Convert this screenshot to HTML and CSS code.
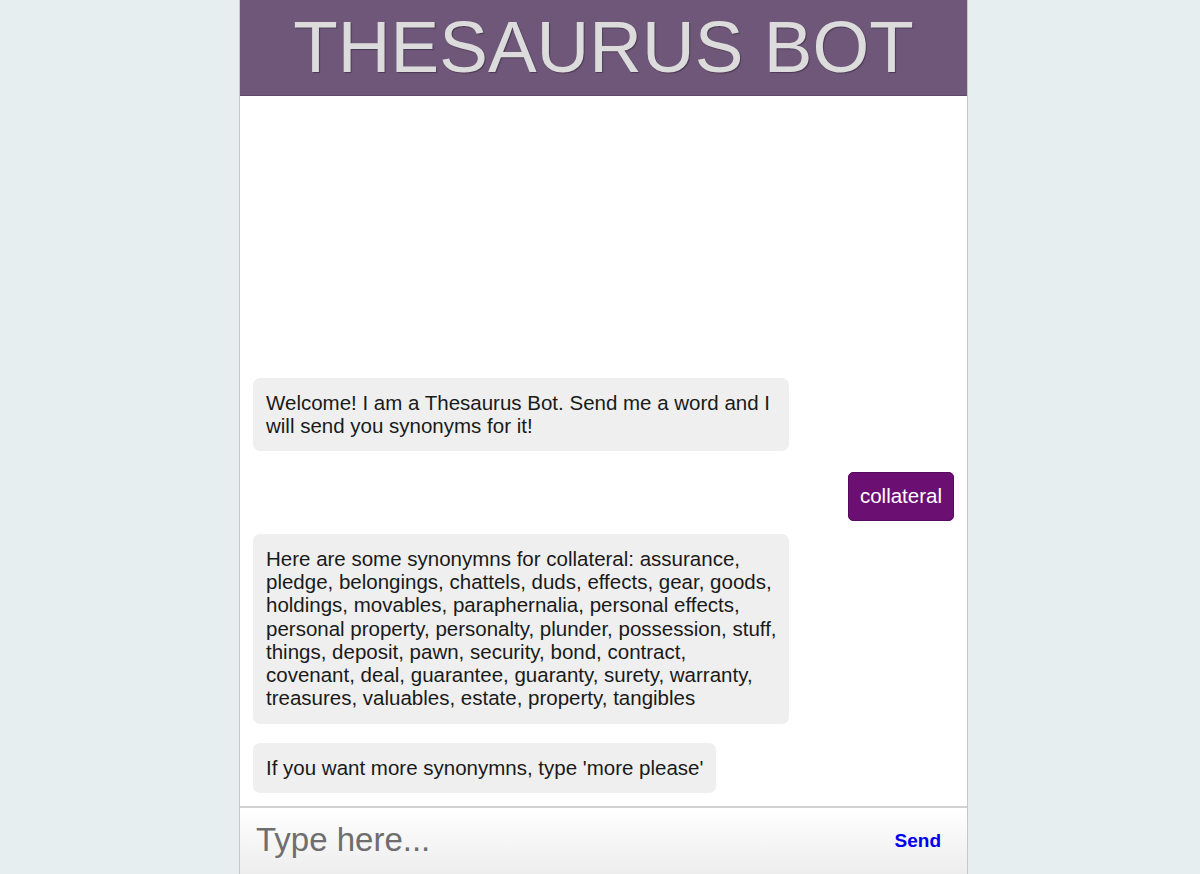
FILE: index.html
```html
<!DOCTYPE html>
<html>
<head>
<meta charset="utf-8">
<link rel="stylesheet" href="styles.css">
</head>
<body>
<div class="page">
  <div class="chat">
    <header class="header"><h1 class="title">THESAURUS BOT</h1></header>
    <main class="messages">
      <div class="msg bot first">Welcome! I am a Thesaurus Bot. Send me a word and I will send you synonyms for it!</div>
      <div class="msg user">collateral</div>
      <div class="msg bot">Here are some synonymns for collateral: assurance, pledge, belongings, chattels, duds, effects, gear, goods, holdings, movables, paraphernalia, personal effects, personal property, personalty, plunder, possession, stuff, things, deposit, pawn, security, bond, contract, covenant, deal, guarantee, guaranty, surety, warranty, treasures, valuables, estate, property, tangibles</div>
      <div class="msg bot last">If you want more synonymns, type 'more please'</div>
    </main>
    <form class="composer">
      <input class="input" type="text" placeholder="Type here...">
      <button class="send" type="button">Send</button>
    </form>
  </div>
</div>
</body>
</html>
```
FILE: styles.css
```css
html, body {
  margin: 0;
  height: 100%;
}
body {
  background: #e6eef0;
  font-family: "Liberation Sans", Arial, sans-serif;
}
.page {
  display: flex;
  justify-content: center;
  padding-left: 7px;
  height: 874px;
  overflow: hidden;
}
.chat {
  width: 727px;
  display: flex;
  flex-direction: column;
  background: #fff;
  border-left: 1px solid #c8c8c8;
  border-right: 1px solid #c8c8c8;
  height: 874px;
}
.header {
  height: 96px;
  background: #6f577a;
  border-bottom: 1px solid #5e4968;
  box-sizing: border-box;
  display: flex;
  justify-content: center;
}
.title {
  margin: 0;
  color: #dcdcdc;
  font-weight: normal;
  font-size: 73px;
  line-height: 96px;
  letter-spacing: 0;
  text-shadow: 1px 1px 1px #4a3a52;
  margin-top: -1px;
}
.messages {
  flex: 1;
  display: flex;
  flex-direction: column;
  justify-content: flex-end;
  padding: 0 13px 13px 13px;
}
.msg {
  font-size: 20.5px;
  line-height: 23.3px;
  border-radius: 7px;
  padding: 13px 13px 14px 13px;
  color: #1a1a1a;
}
.bot {
  align-self: flex-start;
  background: #efefef;
  max-width: 512px;
  padding-right: 11px;
  margin-bottom: 19px;
}
.bot.last {
  padding-right: 13px;
  margin-bottom: 0;
}
.bot.first {
  margin-bottom: 21px;
}
.user {
  align-self: flex-end;
  background: #6b0f73;
  border: 1px solid #560a5d;
  color: #fff;
  padding: 11px 11px 12px 11px;
  border-radius: 5px;
  margin-bottom: 13px;
}
.composer {
  margin: 0;
  height: 68px;
  box-sizing: border-box;
  border-top: 2px solid #d2d2d2;
  background: linear-gradient(#ffffff, #ededed);
  display: flex;
  align-items: center;
  padding: 0 26px 0 16px;
}
.input {
  flex: 1;
  border: none;
  background: transparent;
  outline: none;
  font-family: "Liberation Sans", Arial, sans-serif;
  font-size: 33px;
  color: #333;
  padding: 0;
  margin-top: -2px;
}
.input::placeholder {
  color: #6e6e6e;
}
.send {
  border: none;
  background: transparent;
  color: #0000ee;
  font-family: "Liberation Sans", Arial, sans-serif;
  font-weight: bold;
  font-size: 19px;
  padding: 0;
  cursor: pointer;
}
```
